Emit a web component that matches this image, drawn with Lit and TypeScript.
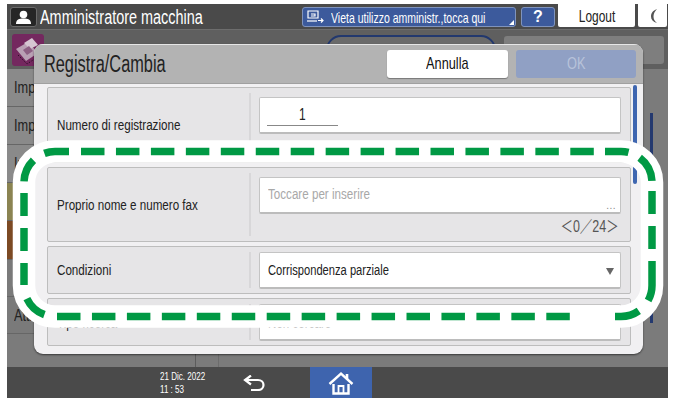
import { LitElement, html, css, svg } from "lit";
import { customElement } from "lit/decorators.js";

const R = 31;
const pt = (cx: number, cy: number, a: number) => {
  const t = (a * Math.PI) / 180;
  return `${(cx + R * Math.cos(t)).toFixed(2)} ${(cy + R * Math.sin(t)).toFixed(2)}`;
};
const arc = (cx: number, cy: number, a0: number, a1: number) =>
  `M${pt(cx, cy, a0)} A${R} ${R} 0 0 1 ${pt(cx, cy, a1)}`;

const dashes: string[] = [];
for (let i = 0; i < 15; i++) {
  const x = 81 + i * 34.95;
  dashes.push(`M${x} 151.5 H${x + 23.5}`);
}
for (let i = 0; i < 15; i++) {
  const x = 57 + i * 34.95;
  dashes.push(`M${x} 316.5 H${x + 23.5}`);
}
dashes.push(arc(55, 182.5, 182, 226));
dashes.push(arc(55, 182.5, 250, 270) + " H69");
dashes.push("M605 151.5 H621 " + arc(621, 182.5, 270, 284).replace(/^M[^A]+/, ""));
dashes.push(arc(621, 182.5, 307, 357));
dashes.push("M652 191 V214", "M652 226 V249");
dashes.push("M652 261 V285.5 " + arc(621, 285.5, 0, 29).replace(/^M[^A]+/, ""));
dashes.push(arc(621, 285.5, 55, 90) + " H615");
dashes.push(arc(55, 285.5, 110, 155));
dashes.push("M24 193 V216", "M24 228 V251", "M24 263 V285");

@customElement("app-root")
export class AppRoot extends LitElement {
  static styles = css`
    :host {
      display: block;
      position: relative;
      width: 675px;
      height: 400px;
      background: #fff;
      overflow: hidden;
      font-family: "Liberation Sans", Arial, sans-serif;
      color: #222;
    }
    .page {
      box-sizing: border-box;
      height: 400px;
      padding: 4px 7px 2px;
    }
    .screen {
      position: relative;
      height: 100%;
      display: flex;
      flex-direction: column;
      background: #7b7b7b;
      overflow: hidden;
    }
    .n {
      display: inline-block;
      white-space: nowrap;
      transform: scaleX(0.75);
      transform-origin: left center;
    }
    .w72 { transform: scaleX(0.72); }
    .w70 { transform: scaleX(0.7); }
    .nc {
      display: inline-block;
      white-space: nowrap;
      transform: scaleX(0.75);
      transform-origin: center;
    }
    .nc.w70 { transform: scaleX(0.7); }

    /* header */
    .header {
      height: 25px;
      background: #4a4a4a;
      display: flex;
      align-items: flex-start;
      flex: none;
    }
    .user {
      box-sizing: border-box;
      width: 27px;
      height: 20px;
      margin: 3px 0 0 3px;
      background: #262626;
      border: 1px solid #6a6a6a;
      border-radius: 3px;
      display: flex;
      align-items: center;
      justify-content: center;
    }
    .who {
      margin: 3px 0 0 3px;
      width: 262px;
      height: 20px;
      line-height: 20px;
      font-size: 19.5px;
      color: #fff;
    }
    .who .n { transform: scaleX(0.74); }
    .banner {
      box-sizing: border-box;
      position: relative;
      width: 214px;
      height: 20px;
      margin: 3px 0 0 0;
      background: #3c5a9c;
      border: 1px solid #7f93bd;
      border-radius: 3px;
      display: flex;
      align-items: center;
      color: #fff;
      font-size: 15px;
    }
    .banner svg {
      margin-left: 3px;
      flex: none;
    }
    .banner .n {
      margin-left: 6px;
    }
    .corner {
      position: absolute;
      right: 1px;
      bottom: 1px;
      width: 0;
      height: 0;
      border-left: 5px solid transparent;
      border-bottom: 5px solid #fff;
    }
    .help {
      box-sizing: border-box;
      width: 34px;
      height: 20px;
      margin: 3px 3px 0 5px;
      background: #3c5a9c;
      border: 1px solid #7f93bd;
      border-radius: 3px;
      color: #fff;
      font-size: 16px;
      font-weight: bold;
      text-align: center;
      line-height: 18px;
    }
    .logout {
      width: 77px;
      height: 23px;
      background: #fff;
      border-radius: 0 0 2px 2px;
      text-align: center;
      line-height: 26px;
      font-size: 17px;
      color: #222;
    }
    .moon {
      width: 29px;
      height: 23px;
      margin-left: 3px;
      background: #fff;
      border-radius: 0 0 2px 2px;
      display: flex;
      align-items: center;
      justify-content: center;
    }

    /* dimmed page behind the dialog */
    .sub {
      height: 40px;
      flex: none;
      background: #5f5f5f;
      border-top: 1px solid #6d6d6d;
      box-sizing: border-box;
      display: flex;
      align-items: center;
      position: relative;
    }
    .tile {
      width: 32px;
      height: 32px;
      margin-left: 5px;
      background: #74285f;
      border-radius: 3px;
      flex: none;
    }
    .oval {
      box-sizing: border-box;
      width: 170px;
      height: 30px;
      margin-left: 282px;
      border: 2px solid #22386e;
      border-radius: 15px;
      background: #6a6a6a;
      flex: none;
    }
    .subbtn {
      width: 160px;
      height: 28px;
      margin-left: 8px;
      background: #7e7e7e;
      border-radius: 3px;
      flex: none;
    }
    .main {
      flex: 1;
      display: flex;
      min-height: 0;
    }
    .list {
      width: 188px;
      flex: none;
      background: #7b7b7b;
      border-right: 1px solid #5c5c5c;
      display: flex;
      flex-direction: column;
    }
    .li {
      box-sizing: border-box;
      height: 38px;
      flex: none;
      padding-left: 7px;
      line-height: 38px;
      font-size: 17px;
      color: #222;
      background: #8a8a8a;
      border-bottom: 1px solid #666;
    }
    .li.olive { background: #8b8452; }
    .li.brown { background: #7c4a24; height: 39px; }
    .li.plain { background: #7a7a7a; height: 37px; }
    .right {
      flex: 1;
      position: relative;
      display: flex;
    }
    .pane {
      width: 22px;
      flex: none;
      border-right: 1px solid #6c6c6c;
    }
    .bar {
      position: absolute;
      right: 15px;
      top: 44px;
      width: 3px;
      height: 210px;
      background: #24396f;
    }

    /* dialog */
    .dialog {
      position: absolute;
      left: 27px;
      top: 40px;
      width: 609px;
      height: 310px;
      background: #f1f0f2;
      border-radius: 9px;
      box-shadow: 0 1px 2px rgba(0, 0, 0, 0.55);
      overflow: hidden;
      display: flex;
      flex-direction: column;
    }
    .dhead {
      height: 40px;
      flex: none;
      box-sizing: border-box;
      background: #b3b3b3;
      border-top: 1px solid #e6e6e6;
      border-bottom: 1px solid #a0a0a0;
      display: flex;
      align-items: center;
      padding-left: 10px;
    }
    .title {
      width: 343px;
      font-size: 23px;
      color: #222;
      flex: none;
    }
    .title .n { transform: scaleX(0.71); }
    .btn {
      width: 121px;
      height: 28px;
      line-height: 28px;
      background: #fff;
      border-radius: 3px;
      box-shadow: 0 1px 1px #777;
      text-align: center;
      font-size: 17px;
      color: #111;
      flex: none;
    }
    .btn.ok {
      width: 120px;
      margin-left: 8px;
      background: #90a0c4;
      box-shadow: none;
      color: #b8c3da;
    }
    .rows {
      flex: 1;
      position: relative;
      padding: 3px 12px 0 13px;
      display: flex;
      flex-direction: column;
      gap: 4px;
    }
    .scroll {
      position: absolute;
      left: 599px;
      top: 1px;
      width: 4px;
      height: 99px;
      background: #3e66b0;
      border-radius: 2px;
    }
    .row {
      box-sizing: border-box;
      flex: none;
      display: flex;
      background: #e6e5e7;
      border: 1px solid #bdbdbd;
      border-radius: 2px;
    }
    .r1 { height: 76px; }
    .r2 { height: 75px; }
    .r3, .r4 { height: 48px; }
    .label {
      box-sizing: border-box;
      width: 203px;
      flex: none;
      margin: 5px 0;
      padding-left: 9px;
      border-right: 2px solid #d8d7d9;
      display: flex;
      align-items: center;
      font-size: 15.5px;
      color: #222;
    }
    .cell {
      flex: 1;
      min-width: 0;
      padding: 5px 9px 0 8px;
    }
    .r1 .cell { padding-top: 9px; }
    .r2 .cell { padding-top: 9px; }
    .input {
      box-sizing: border-box;
      position: relative;
      height: 37px;
      background: #fff;
      border: 1px solid #c4c4c4;
      border-bottom: 2px solid #bcbcbc;
      border-radius: 2px;
      padding-left: 8px;
      display: flex;
      align-items: center;
      font-size: 15.5px;
      color: #222;
    }
    .r4 .n { margin-top: 2px; }
    .phold { color: #a8a8a8; margin-top: -3px; }
    .dots {
      position: absolute;
      right: 4px;
      bottom: 1px;
      font-size: 10px;
      line-height: 10px;
      letter-spacing: 0.5px;
      color: #888;
    }
    .num {
      position: absolute;
      left: 7px;
      top: 7px;
      width: 71px;
      height: 20px;
      border-bottom: 1px solid #888;
      text-align: center;
      font-size: 16px;
      line-height: 19px;
      color: #222;
    }
    .count {
      margin-top: 4px;
      text-align: right;
      padding-right: 2px;
      line-height: 18px;
    }
    .count span {
      display: inline-block;
      white-space: nowrap;
      transform: scaleX(0.78);
      transform-origin: right center;
      font-family: "Liberation Sans", "Noto Sans CJK JP", sans-serif;
      font-size: 16px;
      color: #555;
    }
    .tri {
      position: absolute;
      right: 6px;
      top: 15px;
      width: 0;
      height: 0;
      border-left: 4.5px solid transparent;
      border-right: 4.5px solid transparent;
      border-top: 7px solid #666;
    }

    /* footer */
    .footer {
      height: 31px;
      flex: none;
      background: #4a4a4a;
      display: flex;
      align-items: stretch;
      color: #fff;
    }
    .clock {
      width: 83px;
      margin-left: 153px;
      box-sizing: border-box;
      flex: none;
      font-size: 11.5px;
      line-height: 13px;
      padding-top: 3px;
    }
    .clock .n { display: block; }
    .back {
      width: 67px;
      flex: none;
      display: flex;
      align-items: center;
    }
    .home {
      width: 62px;
      background: #3e64ae;
      flex: none;
      display: flex;
      align-items: center;
      justify-content: center;
    }

    .overlay {
      position: absolute;
      left: 0;
      top: 0;
      pointer-events: none;
    }
  `;

  render() {
    return html`
      <div class="page">
        <div class="screen">
          <div class="header">
            <div class="user">
              <svg width="17" height="15" viewBox="0 0 17 15">
                <circle cx="8.5" cy="4.5" r="3.8" fill="#fff" />
                <path d="M1 14 C1 9.5 4 8.5 8.5 8.5 S16 9.5 16 14Z" fill="#fff" />
              </svg>
            </div>
            <div class="who"><span class="n">Amministratore macchina</span></div>
            <div class="banner">
              <svg width="19" height="16" viewBox="0 0 19 16" fill="none" stroke="#fff" stroke-width="1.2">
                <path d="M2 2H12V9H2Z" />
                <path d="M1 12H11" />
                <path d="M5 5H9V7H5" />
                <path d="M12 11.5H17M15 9.5L17 11.5L15 13.5" />
              </svg>
              <span class="n w70">Vieta utilizzo amministr.,tocca qui</span>
              <span class="corner"></span>
            </div>
            <div class="help">?</div>
            <div class="logout"><span class="nc w70">Logout</span></div>
            <div class="moon">
              <svg width="12" height="16" viewBox="0 0 12 16">
                <path d="M10 1 C5.5 2.5 4 5.5 4 8.5 C4 11.5 6 14 10 15 C7.5 13 6.5 11 6.5 8.5 C6.5 6 7.5 3.5 10 1Z" fill="#555" />
              </svg>
            </div>
          </div>

          <div class="sub">
            <div class="tile">
              <svg width="32" height="32" viewBox="0 0 32 32">
                <path d="M4 15L16 8L26 19L14 27Z" fill="#b9a0b4" />
                <path d="M12 9L20 4L26 11L18 15Z" fill="#d6c6d2" />
                <path d="M11 16L17 12L21 17L15 21Z" fill="#8d5f83" />
                <path d="M6 21L15 30L24 24" fill="none" stroke="#2b1026" stroke-width="1" stroke-dasharray="1.5 1.5" />
              </svg>
            </div>
            <div class="oval"></div>
            <div class="subbtn"></div>
          </div>

          <div class="main">
            <div class="list">
              <div class="li"><span class="n">Imp</span></div>
              <div class="li"><span class="n">Imp</span></div>
              <div class="li"><span class="n">Imp</span></div>
              <div class="li olive"></div>
              <div class="li brown"></div>
              <div class="li plain"></div>
              <div class="li plain"><span class="n">Attività</span></div>
            </div>
            <div class="right"><div class="pane"></div><div class="bar"></div></div>
          </div>

          <div class="footer">
            <div class="clock">
              <span class="n w70">21 Dic. 2022</span>
              <span class="n w70">11 : 53</span>
            </div>
            <div class="back">
              <svg width="23" height="16" viewBox="0 0 23 16" fill="none" stroke="#fff" stroke-width="2.2">
                <path d="M2 5H15C18.5 5 20.5 7.5 20.5 10S18.5 15 15 15H8" />
                <path d="M8 0.5L2 5L8 9.5" />
              </svg>
            </div>
            <div class="home">
              <svg width="26" height="24" viewBox="0 0 26 24" fill="none" stroke="#fff">
                <path d="M1.5 13L13 2.5L24.5 13" stroke-width="2.4" />
                <path d="M19 3V8" stroke-width="2.6" />
                <path d="M5.5 13V22.5H20.5V13" stroke-width="2.4" />
                <path d="M10.5 22V15H15.5V22" stroke-width="1.8" />
              </svg>
            </div>
          </div>

          <div class="dialog">
            <div class="dhead">
              <div class="title"><span class="n">Registra/Cambia</span></div>
              <div class="btn"><span class="nc">Annulla</span></div>
              <div class="btn ok"><span class="nc">OK</span></div>
            </div>
            <div class="rows">
              <div class="scroll"></div>
              <div class="row r1">
                <div class="label"><span class="n">Numero di registrazione</span></div>
                <div class="cell">
                  <div class="input"><span class="num"><span class="nc">1</span></span></div>
                </div>
              </div>
              <div class="row r2">
                <div class="label"><span class="n">Proprio nome e numero fax</span></div>
                <div class="cell">
                  <div class="input">
                    <span class="n phold">Toccare per inserire</span>
                    <span class="dots">...</span>
                  </div>
                  <div class="count"><span>＜0／24＞</span></div>
                </div>
              </div>
              <div class="row r3">
                <div class="label"><span class="n">Condizioni</span></div>
                <div class="cell">
                  <div class="input">
                    <span class="n w72">Corrispondenza parziale</span>
                    <span class="tri"></span>
                  </div>
                </div>
              </div>
              <div class="row r4">
                <div class="label"><span class="n">Tipo ricerca</span></div>
                <div class="cell">
                  <div class="input"><span class="n">Non cercare</span></div>
                </div>
              </div>
            </div>
          </div>
        </div>
      </div>

      <svg class="overlay" width="675" height="400" viewBox="0 0 675 400" fill="none">
        <rect x="24" y="151.5" width="628" height="165" rx="${R}" stroke="#fff" stroke-width="22.5" />
        ${dashes.map((d) => svg`<path d=${d} stroke="#009944" stroke-width="7.5" />`)}
      </svg>
    `;
  }
}
